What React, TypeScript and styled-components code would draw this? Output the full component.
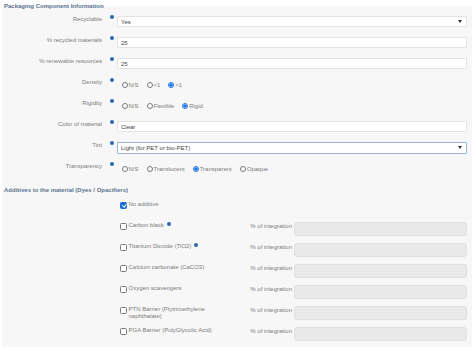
import { FC } from "react";
import styled, { createGlobalStyle } from "styled-components";

const GlobalStyle = createGlobalStyle`
  body {
    margin: 0;
    background: #fff;
    font-family: "Liberation Sans", Arial, sans-serif;
  }
`;

const Panel = styled.fieldset`
  margin: 2px 2px 0;
  padding: 0 5px 6px 0;
  border: none;
  background: #f7f7f7;
  min-width: 0;
`;

const Legend = styled.legend`
  padding: 0;
  margin-left: 2px;
  font-size: 6px;
  line-height: 8px;
  font-weight: bold;
  color: #5a7390;
`;

const Fields = styled.div`
  display: flex;
  flex-direction: column;
  gap: 10px;
  padding-top: 6px;
`;

const Row = styled.div`
  display: grid;
  grid-template-columns: 100px 15px 1fr;
  height: 11px;
  align-items: center;
`;

const Label = styled.label`
  align-self: start;
  margin-top: -1px;
  text-align: right;
  font-size: 6px;
  line-height: 8px;
  color: #7c7c7c;
  white-space: nowrap;
`;

const Dot = styled.span`
  align-self: start;
  justify-self: start;
  margin: -1px 0 0 8px;
  width: 4px;
  height: 4px;
  border-radius: 50%;
  background: #2a6aad;
`;

const TextInput = styled.input`
  display: block;
  box-sizing: border-box;
  width: 100%;
  height: 11px;
  margin: 0;
  padding: 0 3px;
  border: 1px solid #e3e3e3;
  border-radius: 1px;
  background: #fff;
  font: 6px "Liberation Sans", Arial, sans-serif;
  color: #444;
  outline: none;
`;

const SelectWrap = styled.div`
  position: relative;
  height: 11px;
`;

const Select = styled.select<{ $focused?: boolean }>`
  display: block;
  appearance: none;
  box-sizing: border-box;
  width: 100%;
  height: ${(p) => (p.$focused ? "12px" : "11px")};
  margin: 0;
  padding: 0 3px;
  border: 1px solid ${(p) => (p.$focused ? "#9bb7dd" : "#e3e3e3")};
  border-radius: 1px;
  box-shadow: ${(p) => (p.$focused ? "0 0 1px #c5d6ee" : "none")};
  background: #fff;
  font: 6px "Liberation Sans", Arial, sans-serif;
  color: #444;
  outline: none;
`;

const Caret = styled.span`
  position: absolute;
  right: 5px;
  top: 4px;
  border-left: 2px solid transparent;
  border-right: 2px solid transparent;
  border-top: 3px solid #333;
  pointer-events: none;
`;

const RadioGroup = styled.div`
  display: flex;
  align-items: center;
  gap: 8px;
  padding-left: 4.5px;
`;

const Option = styled.label`
  display: flex;
  align-items: center;
  gap: 1px;
  font-size: 6px;
  line-height: 8px;
  color: #7c7c7c;
`;

const Radio = styled.input.attrs({ type: "radio" })`
  width: 6px;
  height: 6px;
  margin: 0;
  accent-color: #1a73e8;
`;

const SectionTitle = styled.div`
  margin: 12px 0 7px 2px;
  font-size: 6px;
  line-height: 8px;
  font-weight: bold;
  color: #5a7390;
`;

const Additives = styled.div`
  display: flex;
  flex-direction: column;
  gap: 7px;
  padding-left: 118px;
`;

const AdditiveRow = styled.div`
  display: grid;
  grid-template-columns: 127px 47px 1fr;
  min-height: 14px;
  align-items: start;
`;

const Check = styled.label`
  display: flex;
  align-items: flex-start;
  gap: 1.5px;
  font-size: 6px;
  line-height: 7px;
  color: #7c7c7c;
`;

const CheckText = styled.span`
  max-width: 95px;
`;

const Checkbox = styled.input.attrs({ type: "checkbox" })`
  appearance: none;
  position: relative;
  flex: none;
  box-sizing: border-box;
  width: 7px;
  height: 7px;
  margin: 1px 0 0;
  border: 1px solid #7a7a7a;
  border-radius: 1.5px;
  background: #fff;

  &:checked {
    border-color: #1a6fd6;
    background: #1a6fd6;
  }

  &:checked::after {
    content: "";
    position: absolute;
    left: 1.5px;
    top: 0;
    width: 1.5px;
    height: 3px;
    border: solid #fff;
    border-width: 0 1px 1px 0;
    transform: rotate(40deg);
  }
`;

const InlineDot = styled.span`
  display: inline-block;
  vertical-align: top;
  margin: 0 0 0 3px;
  width: 4px;
  height: 4px;
  border-radius: 50%;
  background: #2a6aad;
`;

const IntLabel = styled.span`
  text-align: right;
  padding-right: 2px;
  font-size: 6px;
  line-height: 8px;
  color: #7c7c7c;
  white-space: nowrap;
`;

const IntInput = styled.input`
  display: block;
  box-sizing: border-box;
  width: 100%;
  height: 14px;
  margin: 0;
  border: 1px solid #e0e0e0;
  border-radius: 3px;
  background: #e9e9e9;
`;

type RadioRowProps = {
  label: string;
  name: string;
  options: string[];
  selected: string;
};

const RadioRow: FC<RadioRowProps> = ({ label, name, options, selected }) => (
  <Row>
    <Label>{label}</Label>
    <Dot />
    <RadioGroup>
      {options.map((o) => (
        <Option key={o}>
          <Radio name={name} defaultChecked={o === selected} />
          {o}
        </Option>
      ))}
    </RadioGroup>
  </Row>
);

const additives = [
  { name: "Carbon black", dot: true },
  { name: "Titanium Dioxide (TiO2)", dot: true },
  { name: "Calcium carbonate (CaCO3)" },
  { name: "Oxygen scavengers" },
  { name: "PTN Barrier (Plytrimethylene naphthalate)" },
  { name: "PGA Barrier (PolyGlycolic Acid)" },
];

const App: FC = () => {
  return (
    <>
      <GlobalStyle />
      <Panel>
        <Legend>Packaging Component Information</Legend>
        <Fields>
          <Row>
            <Label>Recyclable</Label>
            <Dot />
            <SelectWrap>
              <Select defaultValue="Yes">
                <option>Yes</option>
                <option>No</option>
              </Select>
              <Caret />
            </SelectWrap>
          </Row>
          <Row>
            <Label>% recycled materials</Label>
            <Dot />
            <TextInput defaultValue="25" />
          </Row>
          <Row>
            <Label>% renewable resources</Label>
            <Dot />
            <TextInput defaultValue="25" />
          </Row>
          <RadioRow label="Density" name="density" options={["N/S", "<1", ">1"]} selected=">1" />
          <RadioRow label="Rigidity" name="rigidity" options={["N/S", "Flexible", "Rigid"]} selected="Rigid" />
          <Row>
            <Label>Color of material</Label>
            <Dot />
            <TextInput defaultValue="Clear" />
          </Row>
          <Row>
            <Label>Tint</Label>
            <Dot />
            <SelectWrap>
              <Select $focused defaultValue="Light (for PET or bio-PET)">
                <option>Light (for PET or bio-PET)</option>
                <option>Dark</option>
              </Select>
              <Caret />
            </SelectWrap>
          </Row>
          <RadioRow
            label="Transparency"
            name="transparency"
            options={["N/S", "Translucent", "Transparent", "Opaque"]}
            selected="Transparent"
          />
        </Fields>

        <SectionTitle>Additives to the material (Dyes / Opacifiers)</SectionTitle>
        <Additives>
          <AdditiveRow>
            <Check>
              <Checkbox defaultChecked />
              <CheckText>No additive</CheckText>
            </Check>
          </AdditiveRow>
          {additives.map((a) => (
            <AdditiveRow key={a.name}>
              <Check>
                <Checkbox />
                <CheckText>
                  {a.name}
                  {a.dot && <InlineDot />}
                </CheckText>
              </Check>
              <IntLabel>% of integration</IntLabel>
              <IntInput disabled />
            </AdditiveRow>
          ))}
        </Additives>
      </Panel>
    </>
  );
};

export default App;
